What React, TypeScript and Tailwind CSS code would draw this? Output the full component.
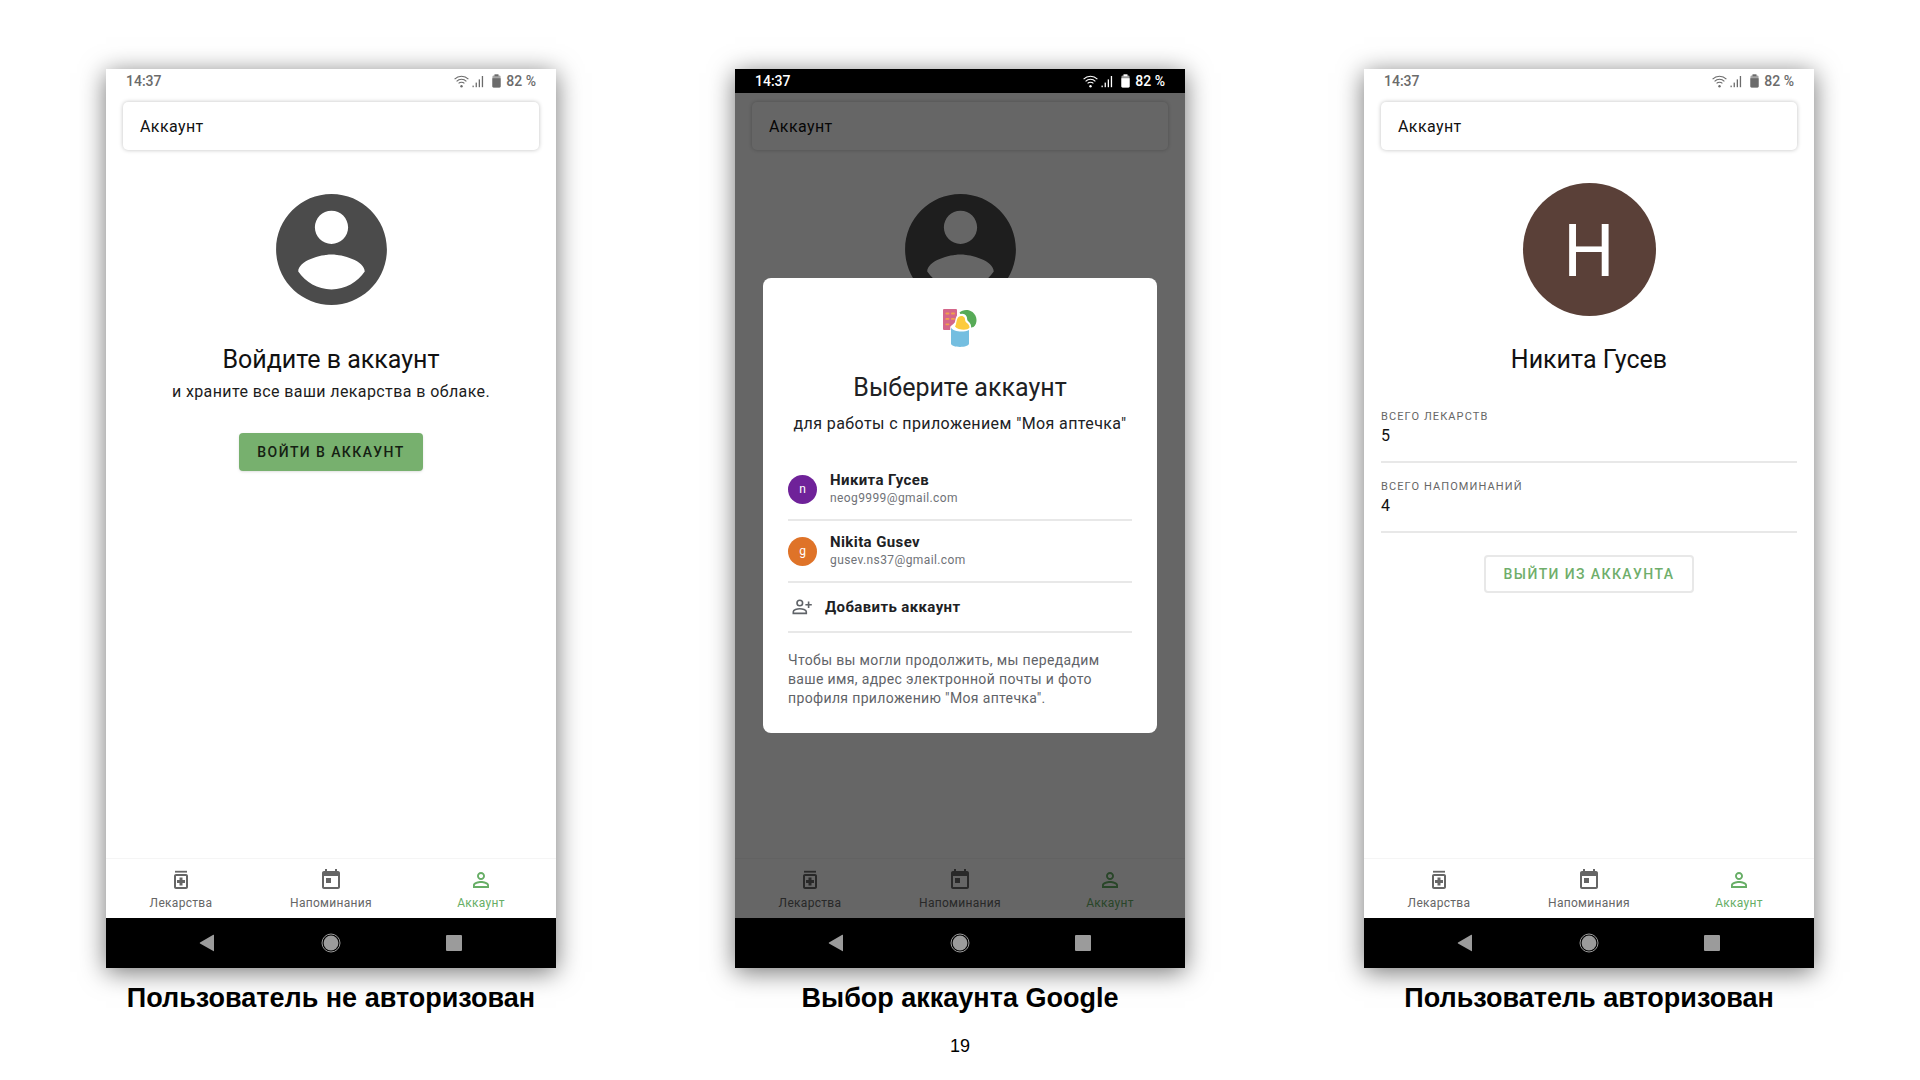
import type { ReactNode } from "react";

function WifiIcon() {
  return (
    <svg viewBox="0 0 15 13" className="h-[13px] w-[15px]" fill="none" stroke="currentColor" strokeWidth="1.1" aria-hidden="true">
      <path d="M0.6 4.1a9.8 9.8 0 0 1 13.8 0" />
      <path d="M2.6 6.3a7 7 0 0 1 9.8 0" />
      <path d="M4.6 8.4a4.1 4.1 0 0 1 5.8 0" />
      <circle cx="7.5" cy="11.2" r="1.2" fill="currentColor" stroke="none" />
    </svg>
  );
}

function SignalIcon() {
  return (
    <svg viewBox="0 0 12 13" className="h-[13px] w-3" fill="currentColor" aria-hidden="true">
      <rect x="0.5" y="10.6" width="1.3" height="1.6" />
      <rect x="3.6" y="7.6" width="1.3" height="4.6" />
      <rect x="6.7" y="4.4" width="1.3" height="7.8" />
      <rect x="9.8" y="1" width="1.3" height="11.2" />
    </svg>
  );
}

function BatteryIcon() {
  return (
    <svg viewBox="0 0 9 14" className="h-[14px] w-[9px]" aria-hidden="true">
      <rect x="2.5" y="0.3" width="4" height="2" fill="currentColor" />
      <rect x="0.4" y="1.4" width="8.2" height="12.2" rx="1.4" fill="currentColor" opacity="0.6" />
      <path d="M0.4 4.2h8.2v8a1.4 1.4 0 0 1-1.4 1.4H1.8a1.4 1.4 0 0 1-1.4-1.4z" fill="currentColor" />
    </svg>
  );
}

function AccountCircle() {
  return (
    <svg viewBox="0 0 24 24" className="size-[133px] text-[#4b4b4b]" fill="currentColor" aria-hidden="true">
      <path d="M12 2C6.48 2 2 6.48 2 12s4.48 10 10 10 10-4.48 10-10S17.52 2 12 2zm0 3c1.66 0 3 1.34 3 3s-1.34 3-3 3-3-1.34-3-3 1.34-3 3-3zm0 14.2c-2.5 0-4.71-1.28-6-3.22.03-1.99 4-3.08 6-3.08 1.99 0 5.97 1.09 6 3.08-1.29 1.94-3.5 3.22-6 3.22z" />
    </svg>
  );
}

function MedicineIcon() {
  return (
    <svg viewBox="0 0 24 24" className="size-6" fill="currentColor" aria-hidden="true">
      <path d="M6 2.8h12v1.8H6z" />
      <path fillRule="evenodd" d="M17 6H7c-1.1 0-2 .9-2 2v11c0 1.1.9 2 2 2h10c1.1 0 2-.9 2-2V8c0-1.1-.9-2-2-2zm0 13H7V8h10v11z" />
      <path d="M10.500 9.500h3V12H16v3h-2.500v2.500h-3V15H8v-3h2.500z" />
    </svg>
  );
}

function CalendarIcon() {
  return (
    <svg viewBox="0 0 24 24" className="size-6" fill="currentColor" aria-hidden="true">
      <path d="M19 3h-1V1h-2v2H8V1H6v2H5c-1.11 0-1.99.9-1.99 2L3 19c0 1.1.89 2 2 2h14c1.1 0 2-.9 2-2V5c0-1.1-.9-2-2-2zm0 16H5V8h14v11zM7 10h5v5H7z" />
    </svg>
  );
}

function PersonIcon() {
  return (
    <svg viewBox="0 0 24 24" className="size-6" fill="currentColor" aria-hidden="true">
      <path d="M12 5.9c1.16 0 2.1.94 2.1 2.1s-.94 2.1-2.1 2.1S9.9 9.16 9.9 8s.94-2.1 2.1-2.1m0 9c2.97 0 6.1 1.46 6.1 2.1v1.1H5.9V17c0-.64 3.13-2.1 6.1-2.1M12 4C9.79 4 8 5.79 8 8s1.79 4 4 4 4-1.79 4-4-1.79-4-4-4zm0 9c-2.67 0-8 1.34-8 4v3h16v-3c0-2.66-5.33-4-8-4z" />
    </svg>
  );
}

function PersonAddIcon() {
  return (
    <svg viewBox="0 0 20 16" className="h-4 w-5" fill="none" stroke="currentColor" strokeWidth="1.6" aria-hidden="true">
      <circle cx="7.8" cy="4" r="2.8" />
      <path d="M1.3 14.4v-1.7c0-1.8 3.8-3 6.5-3s6.500 1.2 6.500 3v1.7z" />
      <path d="M16.6 2.6v6.4M13.4 5.8h6.4" />
    </svg>
  );
}

function PharmacyLogo() {
  return (
    <svg viewBox="0 0 36 40" className="h-10 w-9" aria-hidden="true">
      <rect x="1" y="1" width="14" height="21" rx="1" fill="#d4668a" />
      <g fill="#f0a04b">
        <rect x="3.4" y="4.6" width="4" height="1.8" rx="0.9" />
        <rect x="9" y="4.6" width="4" height="1.8" rx="0.9" />
        <rect x="3.4" y="10" width="4" height="1.8" rx="0.9" />
        <rect x="9" y="10" width="4" height="1.8" rx="0.9" />
        <rect x="3.4" y="15.4" width="4" height="1.8" rx="0.9" />
      </g>
      <path d="M17.5 4.5C20.5 1.4 26.5 1 30.5 4c5 4 5.3 11.5 1 15l-4.5 1z" fill="#57ab57" />
      <path
        d="M9 19c1.5-1.5 3.5-2.5 4.5-4.5 1-2.5 0.5-6.5 3.5-7.5 3-1 6-0.5 7 2 .8 2-.2 3 1.5 4.5s3.5 3.5 2.7 6.5l-1.2 2.5v13c0 4-18 4-18 0z"
        fill="#fff"
        stroke="#fff"
        strokeWidth="1.5"
      />
      <path d="M9 19.5c2 4 12 5.5 18 2.5v13.5c0 4.5-18 4.5-18 0z" fill="#74bee0" />
      <path d="M13 18.5c1.8-2.500 1-7 3.500-9.500 2-1.500 5-1.200 6 .6 1 2 0 3.200 1.800 4.800 1.800 1.500 3.500 2.700 3.200 5.400-2 3-11.500 2.500-14.500-1.300z" fill="#fccb3c" />
    </svg>
  );
}

function StatusBar({ dark = false }: { dark?: boolean }) {
  return (
    <div
      className={
        dark
          ? "flex h-6 shrink-0 items-center bg-black px-5 text-sm font-medium text-white"
          : "flex h-6 shrink-0 items-center bg-white px-5 text-sm font-medium text-[#6b6b6b]"
      }
    >
      <span className="mr-auto">14:37</span>
      <WifiIcon />
      <span className="ml-[3px]">
        <SignalIcon />
      </span>
      <span className="ml-2">
        <BatteryIcon />
      </span>
      <span className="ml-[5px]">82 %</span>
    </div>
  );
}

function TabButton({ label, active = false, children }: { label: string; active?: boolean; children: ReactNode }) {
  return (
    <button
      type="button"
      className={
        active
          ? "flex flex-1 flex-col items-center gap-[3px] text-xs tracking-wide text-[#67ae66]"
          : "flex flex-1 flex-col items-center gap-[3px] text-xs tracking-wide text-[#666666]"
      }
    >
      {children}
      {label}
    </button>
  );
}

function BottomTabs() {
  return (
    <nav aria-label="Разделы" className="mt-auto flex h-[60px] border-t border-[#f5f5f5] pt-[9px]">
      <TabButton label="Лекарства">
        <MedicineIcon />
      </TabButton>
      <TabButton label="Напоминания">
        <CalendarIcon />
      </TabButton>
      <TabButton label="Аккаунт" active>
        <PersonIcon />
      </TabButton>
    </nav>
  );
}

function SystemBar() {
  return (
    <div className="flex h-[50px] shrink-0 items-center justify-center gap-[103px] bg-black text-[#9b9b9b]">
      <button type="button" aria-label="Назад" className="size-5">
        <svg viewBox="0 0 20 20" className="size-5" fill="currentColor">
          <path d="M2 9.6 15.3 1.8q.7-.3.7.5v15.4q0 .8-.7.4L2 10.4q-.6-.4 0-.8z" />
        </svg>
      </button>
      <button type="button" aria-label="Домой" className="size-5">
        <svg viewBox="0 0 20 20" className="size-5" fill="currentColor">
          <circle cx="10" cy="10" r="7.4" />
          <circle cx="10" cy="10" r="9" fill="none" stroke="currentColor" strokeWidth="1" />
        </svg>
      </button>
      <button type="button" aria-label="Недавние" className="size-5">
        <svg viewBox="0 0 20 20" className="size-5" fill="currentColor">
          <rect x="2" y="2" width="16" height="16" rx="1" />
        </svg>
      </button>
    </div>
  );
}

function Phone({
  caption,
  dark = false,
  overlay,
  children,
}: {
  caption: string;
  dark?: boolean;
  overlay?: ReactNode;
  children: ReactNode;
}) {
  return (
    <figure className="flex flex-col">
      <div className="flex aspect-[450/899] flex-col bg-white font-['Roboto',sans-serif] shadow-[0_4px_24px_rgba(0,0,0,0.55)]">
        <StatusBar dark={dark} />
        <div className="relative flex flex-1 flex-col">
          <h2 className="mx-[17px] mt-[9px] flex h-12 items-center rounded-[5px] bg-white px-[17px] pt-0.5 text-base tracking-wide text-[#111111] shadow-[0_0_4px_rgba(0,0,0,0.25)]">
            Аккаунт
          </h2>
          <div className="flex flex-col items-center px-[17px] pt-[33px]">{children}</div>
          <BottomTabs />
          {overlay}
        </div>
        <SystemBar />
      </div>
      <figcaption className="mt-[14px] text-center text-[27px] leading-8 font-bold whitespace-nowrap">{caption}</figcaption>
    </figure>
  );
}

function SignedOut() {
  return (
    <>
      <AccountCircle />
      <h3 className="mt-7 text-[25px] leading-8 text-[#111111]">Войдите в аккаунт</h3>
      <p className="mt-1 text-base tracking-wide text-[#1c1c1c]">и храните все ваши лекарства в облаке.</p>
      <button
        type="button"
        className="mt-[29px] h-[38px] rounded bg-[#77b06e] px-[18px] text-sm font-medium tracking-widest text-[#152013] shadow-sm"
      >
        ВОЙТИ В АККАУНТ
      </button>
    </>
  );
}

function Stat({ label, value }: { label: string; value: number }) {
  return (
    <div className="h-[70px] w-full border-b-2 border-[#e8e8e8]">
      <dt className="pt-[18px] text-[11px] leading-3 tracking-widest text-[#666666]">{label}</dt>
      <dd className="mt-[3px] text-base leading-5 text-[#111111]">{value}</dd>
    </div>
  );
}

function SignedIn() {
  return (
    <>
      <div className="flex size-[133px] items-center justify-center rounded-full bg-[#5a4038] pt-1 text-7xl text-white">Н</div>
      <h3 className="mt-7 text-[25px] leading-8 text-[#111111]">Никита Гусев</h3>
      <dl className="mt-[17px] w-full">
        <Stat label="ВСЕГО ЛЕКАРСТВ" value={5} />
        <Stat label="ВСЕГО НАПОМИНАНИЙ" value={4} />
      </dl>
      <button
        type="button"
        className="mt-[22px] h-[38px] rounded border-2 border-[#e8e8e8] px-[18px] text-sm font-medium tracking-widest text-[#6fae6b]"
      >
        ВЫЙТИ ИЗ АККАУНТА
      </button>
    </>
  );
}

function GoogleAccount({ initial, color, name, email }: { initial: string; color: string; name: string; email: string }) {
  return (
    <button type="button" className="flex w-full items-center gap-[13px] border-b-2 border-[#e8e8e8] py-3 text-left">
      <span className={`flex size-[29px] items-center justify-center rounded-full text-xs text-white ${color}`}>{initial}</span>
      <span className="flex flex-col tracking-wide">
        <span className="text-[15px] leading-[18px] font-bold text-[#202124]">{name}</span>
        <span className="text-xs leading-[18px] text-[#6f7277]">{email}</span>
      </span>
    </button>
  );
}

function AccountDialog() {
  return (
    <div className="absolute inset-0 flex items-center justify-center bg-black/60 px-7">
      <div role="dialog" aria-labelledby="dialog-title" className="flex w-full flex-col items-center rounded-lg bg-white px-[25px] pt-[30px] pb-[25px]">
        <PharmacyLogo />
        <h3 id="dialog-title" className="mt-6 text-[25px] leading-8 text-[#202124]">
          Выберите аккаунт
        </h3>
        <p className="mt-2 text-base tracking-wide whitespace-nowrap text-[#202124]">для работы с приложением "Моя аптечка"</p>
        <div className="mt-[23px] w-full">
          <GoogleAccount initial="n" color="bg-[#6f2299]" name="Никита Гусев" email="neog9999@gmail.com" />
          <GoogleAccount initial="g" color="bg-[#df7328]" name="Nikita Gusev" email="gusev.ns37@gmail.com" />
          <button
            type="button"
            className="flex h-[50px] w-full items-center gap-[13px] border-b-2 border-[#e8e8e8] pl-1 text-left text-[15px] font-bold tracking-wide text-[#202124]"
          >
            <span className="text-[#5f6368]">
              <PersonAddIcon />
            </span>
            Добавить аккаунт
          </button>
        </div>
        <p className="mt-[18px] w-full text-sm leading-[19px] tracking-wide text-[#5f6368]">
          Чтобы вы могли продолжить, мы передадим ваше имя, адрес электронной почты и фото профиля приложению "Моя аптечка".
        </p>
      </div>
    </div>
  );
}

export default function App() {
  return (
    <main className="min-h-screen bg-white pt-[69px] font-['Liberation_Sans',sans-serif] text-black">
      <div className="grid grid-cols-3 gap-[179px] px-[106px]">
        <Phone caption="Пользователь не авторизован">
          <SignedOut />
        </Phone>
        <Phone caption="Выбор аккаунта Google" dark overlay={<AccountDialog />}>
          <AccountCircle />
        </Phone>
        <Phone caption="Пользователь авторизован">
          <SignedIn />
        </Phone>
      </div>
      <footer className="mt-[18px] text-center text-lg">19</footer>
    </main>
  );
}
